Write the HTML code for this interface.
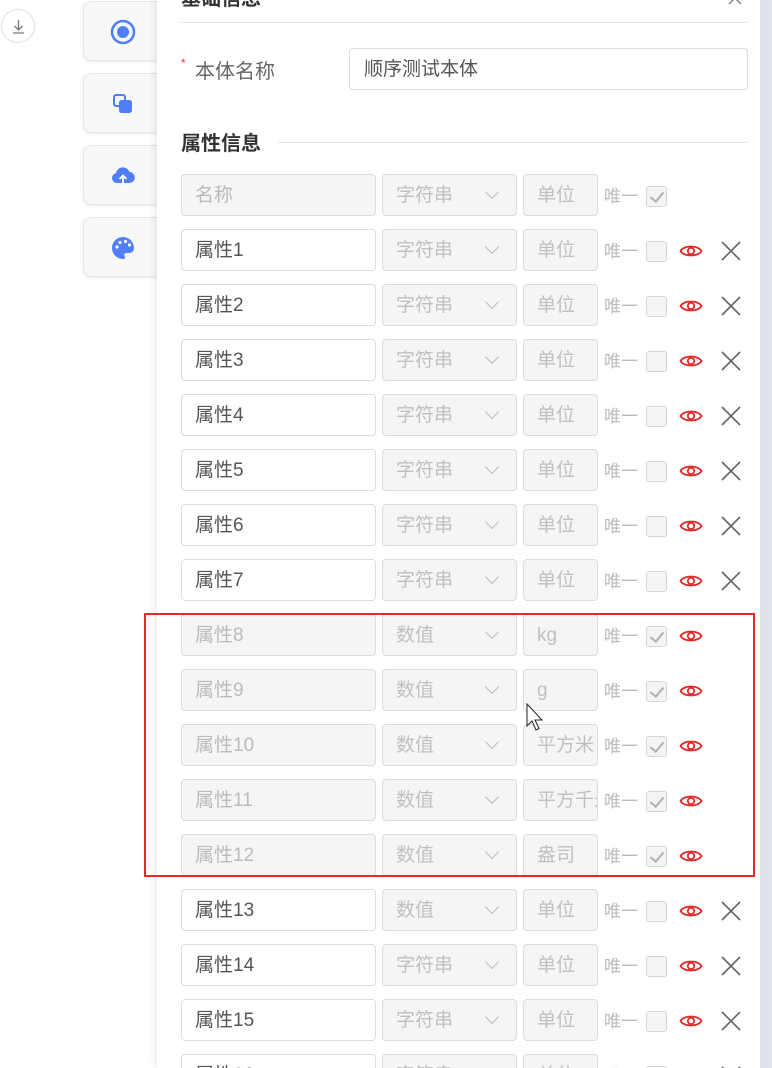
<!DOCTYPE html>
<html><head><meta charset="utf-8"><style>
*{box-sizing:border-box;margin:0;padding:0}
html,body{width:772px;height:1068px;overflow:hidden}
body{background:#fff;position:relative;font-family:"Liberation Sans","Noto Sans CJK SC",sans-serif;}
.strip{position:absolute;left:760px;top:0;width:12px;height:1068px;background:#dfe3ec}
.panel{position:absolute;left:157px;top:0;width:603px;height:1068px;background:#fff;box-shadow:-3px 0 6px rgba(0,0,0,.08)}
.dl{position:absolute;left:1px;top:9px;width:34px;height:34px;border:1px solid #ddd;border-radius:50%}
.sb{position:absolute;left:83px;width:80px;height:60px;background:#f8f8f8;border:1px solid #e6e6e6;border-radius:8px;box-shadow:0 1px 3px rgba(0,0,0,.08)}
.sb svg{position:absolute;left:26px;top:17px}
.a{position:absolute}
.r{position:absolute;left:0;width:772px;height:42px}
.in{position:absolute;top:0;height:42px;border:1px solid #dcdcdc;border-radius:4px;font-size:19px;line-height:41px;padding-left:13px;white-space:nowrap;overflow:hidden}
.n{left:181px;width:195px;color:#555;background:#fff}
.d .n{background:#f5f5f5;color:#bbb}
.t{left:382px;width:135px;background:#f5f5f5;color:#c0c0c0}
.t:after{content:"";position:absolute;right:19px;top:12px;width:9px;height:9px;border-right:1.3px solid #bbb;border-bottom:1.3px solid #bbb;transform:rotate(45deg)}
.u{left:523px;width:75px;background:#f5f5f5;color:#c0c0c0}
.w{position:absolute;left:604px;top:2px;font-size:17px;color:#bbb;line-height:42px}
.cb{position:absolute;left:646px;top:12px;width:21px;height:21px;border:1px solid #d6d6d6;border-radius:3px;background:#f4f4f4}
.c .cb:after{content:"";position:absolute;left:6px;top:2px;width:6px;height:11px;border-right:2.5px solid #b0b0b0;border-bottom:2.5px solid #b0b0b0;transform:rotate(40deg)}
.eye{position:absolute;left:679px;top:14px}
.x{position:absolute;left:721px;top:12px}
.box{position:absolute;left:144px;top:613px;width:611px;height:264px;border:2px solid #e8262b}
</style></head><body>
<div class="strip"></div>
<div class="dl"><svg width="34" height="34" viewBox="0 0 34 34"><path d="M16.5 10v10M12.5 16l4 4 4-4M11 23h11" stroke="#777" stroke-width="1.3" fill="none"/></svg></div>
<div class="sb" style="top:1px"><svg width="26" height="26" viewBox="0 0 26 26"><circle cx="13" cy="13" r="11" fill="none" stroke="#4f7ef7" stroke-width="2.5"/><circle cx="13" cy="13" r="6" fill="#4f7ef7"/></svg></div>
<div class="sb" style="top:73px"><svg width="26" height="26" viewBox="0 0 26 26"><rect x="4" y="4" width="11" height="11" rx="2" fill="none" stroke="#4f7ef7" stroke-width="2"/><rect x="9" y="9" width="13" height="13" rx="2.5" fill="#4f7ef7"/></svg></div>
<div class="sb" style="top:145px"><svg width="26" height="26" viewBox="0 0 26 26"><path d="M7 20a5 5 0 0 1-1-9.9A7 7 0 0 1 19.5 9 5.5 5.5 0 0 1 19 20z" fill="#4f7ef7"/><path d="M13 23V13M9.5 16l3.5-3.5 3.5 3.5" stroke="#fff" stroke-width="1.8" fill="none"/></svg></div>
<div class="sb" style="top:217px"><svg width="26" height="26" viewBox="0 0 26 26"><path d="M13 2a11 11 0 0 0 0 22c2 0 2.5-1.5 1.5-3s0-3 2-3h3a4.5 4.5 0 0 0 4.5-4.5C24 7 19 2 13 2z" fill="#4f7ef7"/><circle cx="7" cy="12" r="1.6" fill="#fff"/><circle cx="10" cy="7.5" r="1.6" fill="#fff"/><circle cx="15.5" cy="6.5" r="1.6" fill="#fff"/><circle cx="19.5" cy="10" r="1.6" fill="#fff"/></svg></div>
<div class="panel"></div>
<div class="a" style="left:181px;top:-18px;font-size:20px;font-weight:bold;color:#333">基础信息</div>
<svg class="a" style="left:727px;top:-8px" width="20" height="14"><path d="M2 0l12 12M14 0L2 12" stroke="#888" stroke-width="1.5"/></svg>
<div class="a" style="left:181px;top:22px;width:567px;height:1px;background:#e4e4e4"></div>
<div class="a" style="left:181px;top:56px;font-size:12px;color:#f33">*</div>
<div class="a" style="left:195px;top:55px;font-size:20px;color:#666">本体名称</div>
<div class="in" style="left:349px;top:48px;width:399px;color:#555;padding-left:14px">顺序测试本体</div>
<div class="a" style="left:181px;top:127px;font-size:20px;font-weight:bold;color:#333">属性信息</div>
<div class="a" style="left:278px;top:142px;width:470px;height:1px;background:#e4e4e4"></div>

<div class="r d c" style="top:174px"><div class="in n">名称</div><div class="in t">字符串</div><div class="in u">单位</div><div class="w">唯一</div><div class="cb"></div></div>

<svg width="0" height="0" style="position:absolute"><defs>
<symbol id="e" viewBox="0 0 24 16"><path d="M1.5 8C5 2 19 2 22.5 8 19 14 5 14 1.5 8z" fill="none" stroke="#e02b2b" stroke-width="1.8"/><circle cx="12" cy="8" r="3.2" fill="none" stroke="#e02b2b" stroke-width="1.8"/></symbol>
<symbol id="k" viewBox="0 0 20 20"><path d="M1 1l18 18M19 1L1 19" stroke="#666" stroke-width="1.6"/></symbol>
</defs></svg>

<div class="r" style="top:229px"><div class="in n">属性1</div><div class="in t">字符串</div><div class="in u">单位</div><div class="w">唯一</div><div class="cb"></div><svg class="eye" width="24" height="16"><use href="#e"/></svg><svg class="x" width="20" height="20"><use href="#k"/></svg></div>
<div class="r" style="top:284px"><div class="in n">属性2</div><div class="in t">字符串</div><div class="in u">单位</div><div class="w">唯一</div><div class="cb"></div><svg class="eye" width="24" height="16"><use href="#e"/></svg><svg class="x" width="20" height="20"><use href="#k"/></svg></div>
<div class="r" style="top:339px"><div class="in n">属性3</div><div class="in t">字符串</div><div class="in u">单位</div><div class="w">唯一</div><div class="cb"></div><svg class="eye" width="24" height="16"><use href="#e"/></svg><svg class="x" width="20" height="20"><use href="#k"/></svg></div>
<div class="r" style="top:394px"><div class="in n">属性4</div><div class="in t">字符串</div><div class="in u">单位</div><div class="w">唯一</div><div class="cb"></div><svg class="eye" width="24" height="16"><use href="#e"/></svg><svg class="x" width="20" height="20"><use href="#k"/></svg></div>
<div class="r" style="top:449px"><div class="in n">属性5</div><div class="in t">字符串</div><div class="in u">单位</div><div class="w">唯一</div><div class="cb"></div><svg class="eye" width="24" height="16"><use href="#e"/></svg><svg class="x" width="20" height="20"><use href="#k"/></svg></div>
<div class="r" style="top:504px"><div class="in n">属性6</div><div class="in t">字符串</div><div class="in u">单位</div><div class="w">唯一</div><div class="cb"></div><svg class="eye" width="24" height="16"><use href="#e"/></svg><svg class="x" width="20" height="20"><use href="#k"/></svg></div>
<div class="r" style="top:559px"><div class="in n">属性7</div><div class="in t">字符串</div><div class="in u">单位</div><div class="w">唯一</div><div class="cb"></div><svg class="eye" width="24" height="16"><use href="#e"/></svg><svg class="x" width="20" height="20"><use href="#k"/></svg></div>
<div class="r d c" style="top:614px"><div class="in n">属性8</div><div class="in t">数值</div><div class="in u">kg</div><div class="w">唯一</div><div class="cb"></div><svg class="eye" width="24" height="16"><use href="#e"/></svg></div>
<div class="r d c" style="top:669px"><div class="in n">属性9</div><div class="in t">数值</div><div class="in u">g</div><div class="w">唯一</div><div class="cb"></div><svg class="eye" width="24" height="16"><use href="#e"/></svg></div>
<div class="r d c" style="top:724px"><div class="in n">属性10</div><div class="in t">数值</div><div class="in u">平方米</div><div class="w">唯一</div><div class="cb"></div><svg class="eye" width="24" height="16"><use href="#e"/></svg></div>
<div class="r d c" style="top:779px"><div class="in n">属性11</div><div class="in t">数值</div><div class="in u">平方千米</div><div class="w">唯一</div><div class="cb"></div><svg class="eye" width="24" height="16"><use href="#e"/></svg></div>
<div class="r d c" style="top:834px"><div class="in n">属性12</div><div class="in t">数值</div><div class="in u">盎司</div><div class="w">唯一</div><div class="cb"></div><svg class="eye" width="24" height="16"><use href="#e"/></svg></div>
<div class="r" style="top:889px"><div class="in n">属性13</div><div class="in t">数值</div><div class="in u">单位</div><div class="w">唯一</div><div class="cb"></div><svg class="eye" width="24" height="16"><use href="#e"/></svg><svg class="x" width="20" height="20"><use href="#k"/></svg></div>
<div class="r" style="top:944px"><div class="in n">属性14</div><div class="in t">字符串</div><div class="in u">单位</div><div class="w">唯一</div><div class="cb"></div><svg class="eye" width="24" height="16"><use href="#e"/></svg><svg class="x" width="20" height="20"><use href="#k"/></svg></div>
<div class="r" style="top:999px"><div class="in n">属性15</div><div class="in t">字符串</div><div class="in u">单位</div><div class="w">唯一</div><div class="cb"></div><svg class="eye" width="24" height="16"><use href="#e"/></svg><svg class="x" width="20" height="20"><use href="#k"/></svg></div>
<div class="r" style="top:1054px"><div class="in n">属性16</div><div class="in t">字符串</div><div class="in u">单位</div><div class="w">唯一</div><div class="cb"></div><svg class="eye" width="24" height="16"><use href="#e"/></svg><svg class="x" width="20" height="20"><use href="#k"/></svg></div>

<div class="box"></div>
<svg class="a" style="left:526px;top:703px" width="20" height="30" viewBox="0 0 20 30"><path d="M1 1v22l5-5 4 9 3-1.5-4-8.5h7z" fill="#fff" stroke="#222" stroke-width="1"/></svg>
</body></html>
